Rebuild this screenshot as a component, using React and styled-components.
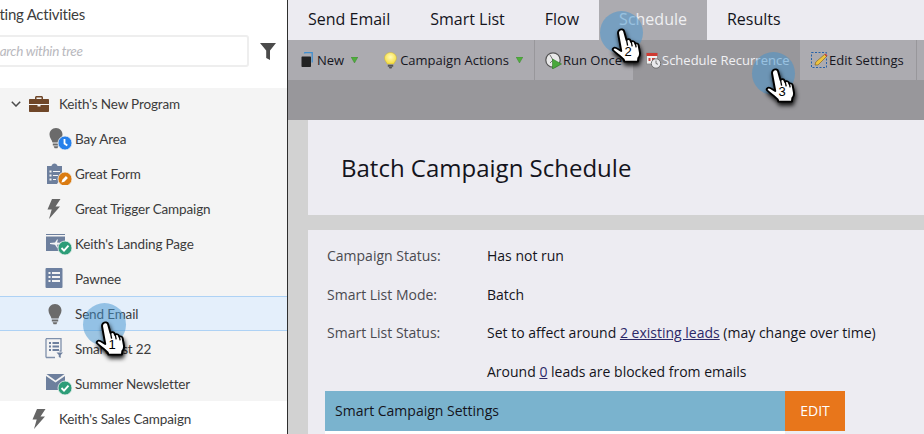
import React from "react";
import styled, { createGlobalStyle } from "styled-components";

const Global = createGlobalStyle`
  html, body { margin: 0; padding: 0; background: #fff; }
  body { width: 924px; height: 434px; overflow: hidden; font-family: "Open Sans", sans-serif; }
  * { box-sizing: border-box; }
`;

const Page = styled.div`
  position: relative;
  display: flex;
  width: 924px;
  height: 434px;
  overflow: hidden;
`;

/* ---------- sidebar ---------- */
const Sidebar = styled.aside`
  flex: 0 0 288px;
  border-right: 1px solid #2e2e2e;
  background: #fff;
  overflow: hidden;
  font-family: "Lato", sans-serif;
`;
const SideHeader = styled.div`
  height: 86px;
  padding-top: 5px;
`;
const SideTitle = styled.div`
  margin-left: -41px;
  font-size: 15px;
  letter-spacing: -0.25px;
  line-height: 18px;
  color: #3d3d3d;
  white-space: nowrap;
`;
const SearchRow = styled.div`
  display: flex;
  align-items: center;
  margin-top: 12px;
`;
const SearchInput = styled.div`
  flex: 0 0 279px;
  height: 32px;
  margin-left: -30px;
  padding-left: 15px;
  border: 2px solid #eeeeee;
  border-radius: 3px;
  font-style: italic;
  font-size: 13.5px;
  letter-spacing: -0.3px;
  line-height: 28px;
  color: #b9b9be;
  white-space: nowrap;
`;
const FilterWrap = styled.div`
  display: flex;
  margin-left: 11px;
`;
const Group = styled.div`
  background: #f4f4f4;
  box-shadow: inset 0 2px 0 #fff;
`;
const Row = styled.div`
  display: flex;
  align-items: center;
  height: 35px;
  padding-left: ${(p) => p.$indent}px;
  font-size: 13.5px;
  letter-spacing: -0.15px;
  color: #3c3c3c;
  white-space: nowrap;
  background: ${(p) => (p.$selected ? "#e4effb" : "transparent")};
  box-shadow: ${(p) => (p.$selected ? "inset 0 1px 0 #aed2f5, inset 0 -1px 0 #aed2f5" : "none")};
`;
const RowIcon = styled.span`
  display: flex;
  justify-content: center;
  flex: 0 0 ${(p) => p.$w}px;
  margin-right: ${(p) => p.$gap}px;
`;

/* ---------- main ---------- */
const Main = styled.main`
  flex: 1;
  display: flex;
  flex-direction: column;
  min-width: 0;
`;
const Tabs = styled.nav`
  display: flex;
  height: 40px;
  background: #ecebf1;
`;
const Tab = styled.div`
  padding: 0 20px;
  font-size: 16px;
  line-height: 38px;
  color: ${(p) => (p.$active ? "#efeff2" : "#14141c")};
  background: ${(p) => (p.$active ? "#acabb0" : "transparent")};
`;
const Toolbar = styled.div`
  display: flex;
  height: 40px;
  background: #acabb0;
`;
const ToolGroup = styled.div`
  display: flex;
  align-items: center;
  flex: 0 0 ${(p) => p.$w}px;
  padding-left: ${(p) => p.$pad}px;
  background: ${(p) => (p.$active ? "#98979b" : "transparent")};
  border-right: ${(p) => (p.$line ? "1px solid #98979b" : "0")};
`;
const ToolLabel = styled.span`
  margin-left: ${(p) => p.$gap}px;
  font-size: 13px;
  color: ${(p) => (p.$active ? "#f0f0f3" : "#16161e")};
  white-space: nowrap;
`;
const ToolItem = styled.div`
  display: flex;
  align-items: center;
  margin-right: ${(p) => p.$gap || 0}px;
`;
const Caret = styled.svg`
  margin-left: 7px;
`;
const DarkBand = styled.div`
  height: 40px;
  background: #98979b;
`;
const Content = styled.div`
  flex: 1;
  padding-left: 20px;
  background: #d2d2d2;
  overflow: hidden;
`;
const HeadCard = styled.div`
  display: flex;
  align-items: center;
  height: 95px;
  padding: 0 0 0 33px;
  background: #edecf2;
  margin-bottom: 15px;
`;
const Heading = styled.h1`
  margin: 0;
  font-size: 24px;
  font-weight: 400;
  color: #14141c;
`;
const InfoCard = styled.div`
  height: 204px;
  padding: 6px 0 0 19px;
  background: #edecf2;
`;
const InfoRow = styled.div`
  display: grid;
  grid-template-columns: 160px 1fr;
  align-items: center;
  height: 38.75px;
  font-size: 14px;
`;
const Label = styled.span`
  color: #4a4a50;
`;
const Value = styled.span`
  color: #14141c;
  white-space: nowrap;
`;
const Link = styled.a`
  color: #2c2868;
  text-decoration: underline;
`;
const SettingsBar = styled.div`
  display: flex;
  width: 520px;
  margin-left: -2px;
`;
const SettingsTitle = styled.div`
  flex: 1;
  height: 40px;
  padding-left: 10px;
  background: #7ab3ce;
  font-size: 14px;
  line-height: 40px;
  color: #14141c;
`;
const EditButton = styled.div`
  flex: 0 0 60px;
  height: 40px;
  background: #e8761b;
  color: #fff;
  font-size: 14px;
  line-height: 40px;
  text-align: center;
`;
const WhiteStrip = styled.div`
  width: 460px;
  height: 3px;
  margin-left: -2px;
  background: #fff;
`;

/* ---------- click markers (over the page) ---------- */
const Marker = styled.div`
  position: absolute;
  left: ${(p) => p.$x}px;
  top: ${(p) => p.$y}px;
  width: 0;
  height: 0;
`;
const Halo = styled.div`
  position: absolute;
  left: -21.5px;
  top: -21.5px;
  width: 43px;
  height: 43px;
  border-radius: 50%;
  background: rgba(66, 148, 208, 0.5);
`;
const Hand = styled.svg`
  position: absolute;
  left: -11px;
  top: -2px;
  filter: drop-shadow(1px 3px 2px rgba(0, 0, 0, 0.9));
`;
const MarkerNum = styled.span`
  position: absolute;
  left: -3px;
  top: 14px;
  width: 20px;
  text-align: center;
  font-family: "Liberation Sans", sans-serif;
  font-size: 13px;
  line-height: 15px;
  color: #000;
`;

/* ---------- drawings ---------- */
const Svg = ({ w = 20, h = 24, vb, children }) => (
  <svg width={w} height={h} viewBox={vb || `0 0 ${w} ${h}`}>{children}</svg>
);

const Bulb = () => (
  <g>
    <path d="M7 1C3 1 .5 4 .5 7.500c0 3.500 2.400 5 3 8h7c.6-3 3-4.500 3-8C13.500 4 11 1 7 1z" fill="#6b6b6b" />
    <path d="M3.800 16.500h6.400v2H3.800zM4.600 19.300h4.800l-1 2H5.600z" fill="#6b6b6b" />
  </g>
);

const BadgeBase = ({ c, children, cx = 17, cy = 17 }) => (
  <g transform={`translate(${cx} ${cy})`}>
    <circle r="7" fill={c} stroke="#f4f4f4" strokeWidth="0.8" />
    {children}
  </g>
);
const PenBadge = () => (
  <BadgeBase c="#da7b11" cx={19} cy={16}><path d="M-3.500 3.500l.8-2.800 3.600-3.600 2 2-3.600 3.600z" fill="#fff" /></BadgeBase>
);
const CheckBadge = () => (
  <BadgeBase c="#2d9d78" cx={20} cy={16}><path d="M-3.500 0l2.500 2.600 4.500-5" stroke="#fff" strokeWidth="1.900" fill="none" /></BadgeBase>
);

const IconBriefcase = () => (
  <Svg w={20} h={16}>
    <path d="M6 3V1.500C6 .7 6.700 0 7.500 0h5c.8 0 1.500.7 1.500 1.500V3h-1.500V1.500h-5V3z" fill="#6f4628" />
    <path d="M1 3h18c.6 0 1 .4 1 1v4H0V4c0-.6.4-1 1-1zM0 9h8.500v1.500h3V9H20v6c0 .6-.4 1-1 1H1c-.6 0-1-.4-1-1z" fill="#6f4628" />
  </Svg>
);
const IconBayArea = () => (
  <Svg w={24} h={22}>
    <g transform="translate(1 -1)"><Bulb /></g>
    <BadgeBase c="#2680eb" cx={17} cy={15}><path d="M-.5 -4v4.500l2.800 2" stroke="#fff" strokeWidth="1.800" fill="none" /></BadgeBase>
  </Svg>
);
const IconForm = () => (
  <Svg w={26} h={22}>
    <path d="M1 3h4.500c.3-1.500 1.500-2.500 3-2.500s2.700 1 3 2.500H16v10l-5 8H1z" fill="#6d7f9d" />
    <path d="M3.500 7.500h2v2h-2zM7 8h7v1H7zM3.500 11.500h2v2h-2zM7 12h5v1H7zM3.500 15.500h2v2h-2zM7 16h3v1H7z" fill="#f4f4f4" />
    <PenBadge />
  </Svg>
);
const IconBolt = () => (
  <Svg w={14} h={20}><path d="M5 0h8.500L8.500 7.500H13L2 20l2.700-9.500H.5z" fill="#666" /></Svg>
);
const IconLanding = () => (
  <Svg w={27} h={23}>
    <path d="M1 2h19v1H1z" fill="#6d7f9d" />
    <path d="M1 4.500h19V9l-5 10H1z" fill="#6d7f9d" />
    <path d="M5 11l5-.5 2-3h1l-1 3 3 .3.800-1h.7l-.5 1.800.5 1.800h-.7l-.8-1-3 .3 1 3h-1l-2-3-5-.7z" fill="#f4f4f4" />
    <CheckBadge />
  </Svg>
);
const IconList = () => (
  <Svg w={18} h={21}>
    <rect x="0.500" y="0" width="17" height="20" rx="1" fill="#6d80a0" />
    <path d="M3.500 4h2v2h-2zM7 4h8v2H7zM3.500 8h2v2h-2zM7 8h8v2H7zM3.500 12h2v2h-2zM7 12h8v2H7z" fill="#f4f4f4" />
  </Svg>
);
const IconBulbPlain = () => (
  <Svg w={14} h={22}><Bulb /></Svg>
);
const IconSmartList = () => (
  <Svg w={18} h={21}>
    <path d="M1 .7h15V13h-1.500M10 19.500H1z" fill="none" stroke="#7f90ab" strokeWidth="1.300" />
    <path d="M1 .7v18.800" stroke="#7f90ab" strokeWidth="1.300" />
    <path d="M4 4h2v2H4zM7.500 4H14v2H7.500zM4 7.500h2v2H4zM7.500 7.500H14v2H7.500zM4 11h2v2H4zM7.500 11H14v2H7.500z" fill="#6d7f9d" />
    <path d="M11.500 14.500h6.500l-2.300 2.600V20l-1.900-.9v-2z" fill="#6d7f9d" />
  </Svg>
);
const IconMail = () => (
  <Svg w={27} h={23}>
    <path d="M1 4L10.500 10.500 20 4v7l-5 7H1z" fill="#6d7f9d" />
    <path d="M1.500 2h18l-9 6.500z" fill="#6d7f9d" />
    <CheckBadge />
  </Svg>
);
const IconFilter = () => (
  <svg width="16" height="17" viewBox="0 0 16 17"><path d="M0 0h16l-6 7.500V17l-3.800-2V7.500z" fill="#4b4b4b" /></svg>
);
const Chevron = () => (
  <svg width="10" height="6" viewBox="0 0 10 6"><path d="M.8 .8L5 5l4.200-4.200" stroke="#4b4b4b" strokeWidth="1.500" fill="none" /></svg>
);

const ToolNew = () => (
  <Svg w={12} h={16}>
    <path d="M3.500 1.500c0-.6.4-1 1-1h6.700v10" fill="none" stroke="#3f8fd0" strokeWidth="1.300" />
    <path d="M1.500 4.500h7.500c.6 0 1 .4 1 1V14c0 .6-.4 1-1 1H1.500c-.6 0-1-.4-1-1V5.500c0-.6.4-1 1-1z" fill="#222" />
  </Svg>
);
const ToolBulb = () => (
  <Svg w={13} h={17}>
    <defs>
      <radialGradient id="yb" cx="50%" cy="40%" r="60%"><stop offset="0%" stopColor="#fffbb8" /><stop offset="100%" stopColor="#f6dc3c" /></radialGradient>
    </defs>
    <path d="M6.500 .5C3 .5 .5 3 .5 6c0 2.800 2 3.800 2.700 6h6.600c.7-2.200 2.700-3.200 2.700-6 0-3-2.500-5.500-6-5.500z" fill="url(#yb)" stroke="#c9b33a" strokeWidth="0.500" />
    <path d="M3.800 12.800h5.400v2H3.800zM4.800 15h3.400l-.7 1.500H5.500z" fill="#555" />
  </Svg>
);
const ToolRun = () => (
  <Svg w={17} h={17}>
    <circle cx="8" cy="8" r="7.200" fill="#e9e9e9" stroke="#555" strokeWidth="1.200" />
    <path d="M8 8L5 3M8 8l-3 3" stroke="#777" strokeWidth="1" />
    <path d="M7.500 7l9 5-9 5z" fill="#49a83b" stroke="#2d7a25" strokeWidth="0.600" />
  </Svg>
);
const ToolCal = () => (
  <Svg w={15} h={17}>
    <rect x="0.500" y="1" width="11" height="11" fill="#f2f2f2" stroke="#888" strokeWidth="0.800" />
    <rect x="0.500" y="1" width="11" height="3" fill="#cf3a32" />
    <path d="M2.500 6h2v3h-2zM6 6h3v3H6z" fill="#c9443c" />
    <circle cx="10" cy="11.500" r="4.700" fill="#e9e9ec" stroke="#666" strokeWidth="0.900" />
    <path d="M10 8.500v3l2 .8" stroke="#555" strokeWidth="0.800" fill="none" />
  </Svg>
);
const ToolEdit = () => (
  <Svg w={17} h={17}>
    <rect x="0.500" y="0.500" width="15" height="15" fill="none" stroke="#2561a8" strokeWidth="1" strokeDasharray="2 1.500" />
    <path d="M4 13l.8-3L13.500 2.500l2 2L7 13z" fill="#edc33f" stroke="#7a5a1a" strokeWidth="0.600" />
    <path d="M13.500 2.500l2 2 1-1-2-2z" fill="#c8413c" />
  </Svg>
);
const GreenCaret = () => (
  <Caret width="7" height="6" viewBox="0 0 8 7"><path d="M0 0h8L4 7z" fill="#4fae3c" stroke="#3c7d31" strokeWidth="0.500" /></Caret>
);

const HandShape = () => (
  <Hand width="35" height="36" viewBox="0 0 32 38" preserveAspectRatio="none">
    <path
      d="M8.500 2.200c1.600-1.500 3.900-.8 4.400 1.200l2.200 9.200c1.100-1.300 3-.9 3.600.5l.6 1.500c1-1.100 2.900-.7 3.400.8l.4 1.300c1-.8 2.600-.3 3 1.100l1.300 8.200c.3 2.600-.4 4.300-1.500 5.800l-.4 3.700H13.200l-.8-2.500C10 30 5.400 26.500 3 23.800c-1.400-1.700.6-3.800 2.500-2.800l4.800 3.300L7.400 6c-.2-1.400.2-2.900 1.100-3.800z"
      fill="#fff"
      stroke="#000"
      strokeWidth="1.800"
      strokeLinejoin="round"
    />
    <path d="M15.100 12.600l1 6M19.400 14.500l.9 5M23.200 16.500l.7 4" stroke="#000" strokeWidth="1.200" fill="none" />
  </Hand>
);

const ClickMarker = ({ x, y, hx, hy, n }) => (
  <>
    <Marker $x={x} $y={y}><Halo /></Marker>
    <Marker $x={hx} $y={hy}>
      <HandShape />
      <MarkerNum>{n}</MarkerNum>
    </Marker>
  </>
);

const tree = [
  { label: "Bay Area", icon: <IconBayArea />, w: 24, gap: 3, indent: 48 },
  { label: "Great Form", icon: <IconForm />, w: 26, gap: 3, indent: 46 },
  { label: "Great Trigger Campaign", icon: <IconBolt />, w: 14, gap: 14, indent: 47 },
  { label: "Keith's Landing Page", icon: <IconLanding />, w: 27, gap: 3, indent: 45 },
  { label: "Pawnee", icon: <IconList />, w: 18, gap: 12, indent: 45 },
  { label: "Send Email", icon: <IconBulbPlain />, w: 14, gap: 13, indent: 48, selected: true },
  { label: "Smart List 22", icon: <IconSmartList />, w: 18, gap: 12, indent: 45 },
  { label: "Summer Newsletter", icon: <IconMail />, w: 27, gap: 3, indent: 45 },
];

export default function App() {
  return (
    <Page>
      <Global />
      <Sidebar>
        <SideHeader>
          <SideTitle>Marketing Activities</SideTitle>
          <SearchRow>
            <SearchInput>Search within tree</SearchInput>
            <FilterWrap><IconFilter /></FilterWrap>
          </SearchRow>
        </SideHeader>
        <Group>
          <Row $indent={11}>
            <RowIcon $w={10} $gap={8}><Chevron /></RowIcon>
            <RowIcon $w={20} $gap={10}><IconBriefcase /></RowIcon>
            Keith's New Program
          </Row>
          {tree.map((t) => (
            <Row key={t.label} $indent={t.indent} $selected={t.selected}>
              <RowIcon $w={t.w} $gap={t.gap}>{t.icon}</RowIcon>
              {t.label}
            </Row>
          ))}
        </Group>
        <Row $indent={32}>
          <RowIcon $w={14} $gap={13}><IconBolt /></RowIcon>
          Keith's Sales Campaign
        </Row>
      </Sidebar>
      <Main>
        <Tabs>
          <Tab>Send Email</Tab>
          <Tab>Smart List</Tab>
          <Tab>Flow</Tab>
          <Tab $active>Schedule</Tab>
          <Tab>Results</Tab>
        </Tabs>
        <Toolbar>
          <ToolGroup $w={247} $pad={13} $line>
            <ToolItem $gap={26}><ToolNew /><ToolLabel $gap={4}>New</ToolLabel><GreenCaret /></ToolItem>
            <ToolItem><ToolBulb /><ToolLabel $gap={3}>Campaign Actions</ToolLabel><GreenCaret /></ToolItem>
          </ToolGroup>
          <ToolGroup $w={98} $pad={10}><ToolRun /><ToolLabel $gap={1}>Run Once</ToolLabel></ToolGroup>
          <ToolGroup $w={167} $pad={13} $active><ToolCal /><ToolLabel $gap={1} $active>Schedule Recurrence</ToolLabel></ToolGroup>
          <ToolGroup $w={117} $pad={11} $line><ToolEdit /><ToolLabel $gap={1}>Edit Settings</ToolLabel></ToolGroup>
        </Toolbar>
        <DarkBand />
        <Content>
          <HeadCard><Heading>Batch Campaign Schedule</Heading></HeadCard>
          <InfoCard>
            <InfoRow><Label>Campaign Status:</Label><Value>Has not run</Value></InfoRow>
            <InfoRow><Label>Smart List Mode:</Label><Value>Batch</Value></InfoRow>
            <InfoRow><Label>Smart List Status:</Label><Value>Set to affect around <Link>2 existing leads</Link> (may change over time)</Value></InfoRow>
            <InfoRow><Label /><Value>Around <Link>0</Link> leads are blocked from emails</Value></InfoRow>
            <SettingsBar>
              <SettingsTitle>Smart Campaign Settings</SettingsTitle>
              <EditButton>EDIT</EditButton>
            </SettingsBar>
            <WhiteStrip />
          </InfoCard>
        </Content>
      </Main>
      <ClickMarker x={104.5} y={324.5} hx={105} hy={323} n="1" />
      <ClickMarker x={621} y={32.5} hx={621} hy={30} n="2" />
      <ClickMarker x={773.5} y={73.5} hx={775} hy={70} n="3" />
    </Page>
  );
}
